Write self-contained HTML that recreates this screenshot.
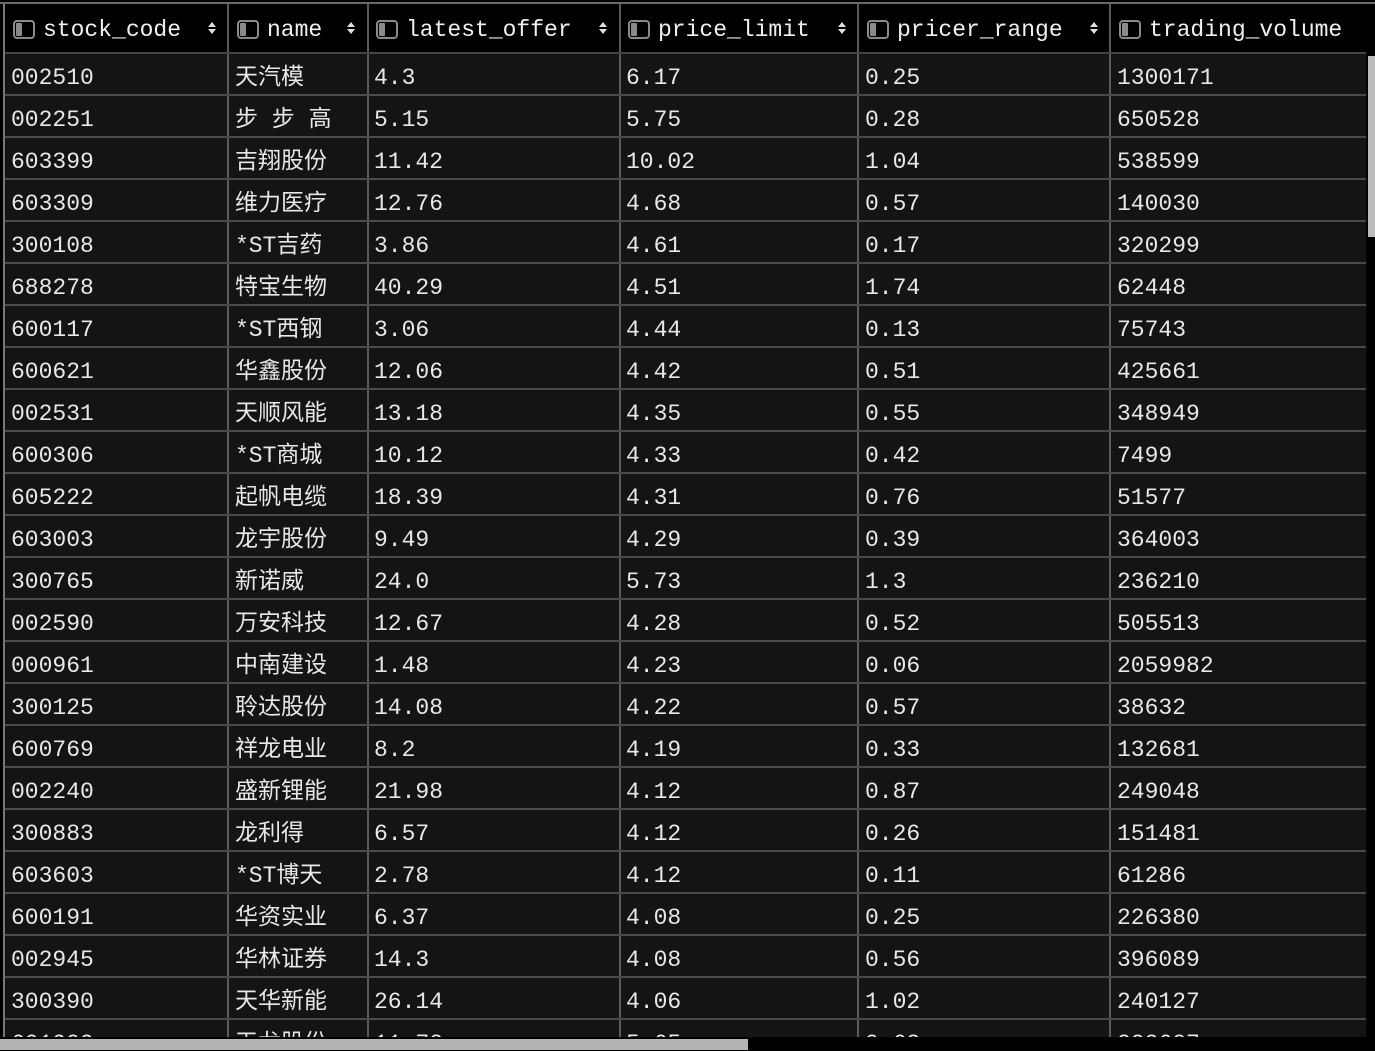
<!DOCTYPE html>
<html><head><meta charset="utf-8"><style>
*{margin:0;padding:0;box-sizing:border-box}
html,body{width:1375px;height:1051px}
body{background:#000;overflow:hidden;position:relative;font-family:"Liberation Mono","Noto Sans CJK SC",monospace;font-size:23px;color:#e8e8e8}
.top{position:absolute;left:0;top:2px;width:1375px;height:2px;background:#6a6a6a}
.hdr{position:absolute;left:5px;top:4px;width:1361px;height:49px;background:#000}
.body{position:absolute;left:5px;top:54px;width:1361px;height:983px;background:#141414;overflow:hidden}
.vl{position:absolute;width:2px;background:#5a5a5a}
.hl{position:absolute;left:5px;width:1361px;height:2px;background:#4a4a4a}
.c{position:absolute;white-space:nowrap;line-height:42px;height:42px}
.h{position:absolute;white-space:nowrap;top:6px;line-height:49px;color:#f0f0f0}
.ic{position:absolute;top:20px;width:22px;height:19px;border:2px solid #8a8a8a;border-radius:4px}
.ic:before{content:"";position:absolute;left:1px;top:1px;width:6px;height:13px;background:#8a8a8a;border-radius:1px}
.s{position:absolute;top:21px;width:8px;height:14px}
.s:before{content:"";position:absolute;left:0;top:1px;border-left:4px solid transparent;border-right:4px solid transparent;border-bottom:5px solid #ddd}
.s:after{content:"";position:absolute;left:0;top:8px;border-left:4px solid transparent;border-right:4px solid transparent;border-top:5px solid #ddd}
#rows{position:absolute;left:0;top:0;width:1366px;height:1037px;overflow:hidden}
</style></head><body>
<div class="top"></div>
<div class="hdr"></div>
<div class="body"></div>
<div class="vl" style="left:3px;top:4px;height:1033px;background:#777"></div>
<div class="vl" style="left:227px;top:4px;height:1033px"></div>
<div class="vl" style="left:367px;top:4px;height:1033px"></div>
<div class="vl" style="left:619px;top:4px;height:1033px"></div>
<div class="vl" style="left:857px;top:4px;height:1033px"></div>
<div class="vl" style="left:1109px;top:4px;height:1033px"></div>
<div class="hl" style="top:52px;background:#444"></div>

<div class="ic" style="left:13px"></div><div class="h" style="left:43px">stock_code</div><div class="s" style="left:208px"></div>
<div class="ic" style="left:237px"></div><div class="h" style="left:267px">name</div><div class="s" style="left:347px"></div>
<div class="ic" style="left:376px"></div><div class="h" style="left:406px">latest_offer</div><div class="s" style="left:599px"></div>
<div class="ic" style="left:628px"></div><div class="h" style="left:658px">price_limit</div><div class="s" style="left:838px"></div>
<div class="ic" style="left:867px"></div><div class="h" style="left:897px">pricer_range</div><div class="s" style="left:1090px"></div>
<div class="ic" style="left:1119px"></div><div class="h" style="left:1149px">trading_volume</div>

<div id="rows"></div>
<script>
var d=[["002510","天汽模","4.3","6.17","0.25","1300171"],["002251","步 步 高","5.15","5.75","0.28","650528"],["603399","吉翔股份","11.42","10.02","1.04","538599"],["603309","维力医疗","12.76","4.68","0.57","140030"],["300108","*ST吉药","3.86","4.61","0.17","320299"],["688278","特宝生物","40.29","4.51","1.74","62448"],["600117","*ST西钢","3.06","4.44","0.13","75743"],["600621","华鑫股份","12.06","4.42","0.51","425661"],["002531","天顺风能","13.18","4.35","0.55","348949"],["600306","*ST商城","10.12","4.33","0.42","7499"],["605222","起帆电缆","18.39","4.31","0.76","51577"],["603003","龙宇股份","9.49","4.29","0.39","364003"],["300765","新诺威","24.0","5.73","1.3","236210"],["002590","万安科技","12.67","4.28","0.52","505513"],["000961","中南建设","1.48","4.23","0.06","2059982"],["300125","聆达股份","14.08","4.22","0.57","38632"],["600769","祥龙电业","8.2","4.19","0.33","132681"],["002240","盛新锂能","21.98","4.12","0.87","249048"],["300883","龙利得","6.57","4.12","0.26","151481"],["603603","*ST博天","2.78","4.12","0.11","61286"],["600191","华资实业","6.37","4.08","0.25","226380"],["002945","华林证券","14.3","4.08","0.56","396089"],["300390","天华新能","26.14","4.06","1.02","240127"],["601999","天龙股份","11.72","5.65","0.63","222627"]];
var xs=[11,235,374,626,865,1117],h="";
d.forEach(function(r,i){var y=54+i*42;
 if(i>0)h+='<div class="hl" style="top:'+(y-2)+'px"></div>';
 r.forEach(function(v,j){var t=j==1?v.replace(/ /g,'&nbsp;'):v;
  h+='<div class="c" style="left:'+xs[j]+'px;top:'+(y+3)+'px">'+t+'</div>';});
});
document.getElementById('rows').innerHTML=h;
</script>
<div style="position:absolute;left:0;top:1037px;width:1375px;height:14px;background:#000"></div>
<div style="position:absolute;left:0;top:1039px;width:748px;height:11px;background:#b4b4b4"></div>
<div style="position:absolute;left:1366px;top:4px;width:9px;height:1033px;background:#000"></div>
<div style="position:absolute;left:1368px;top:56px;width:7px;height:181px;background:#bbb"></div>
</body></html>
